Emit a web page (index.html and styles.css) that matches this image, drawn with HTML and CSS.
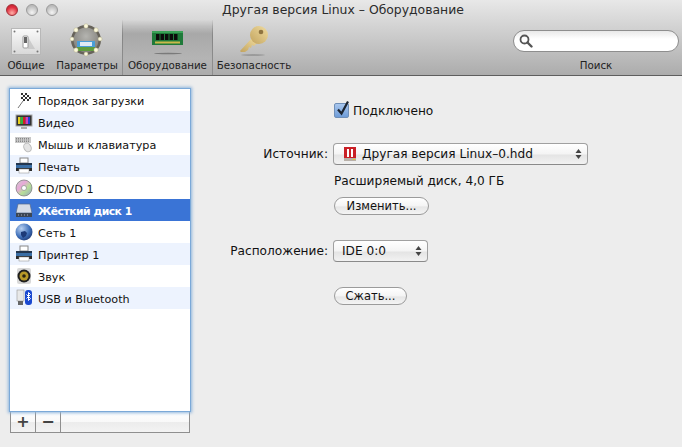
FILE: index.html
```html
<!DOCTYPE html>
<html lang="ru">
<head>
<meta charset="utf-8">
<title>Другая версия Linux – Оборудование</title>
<link rel="stylesheet" href="styles.css">
</head>
<body>
<div class="window">
  <header class="toolbar">
    <div class="titlebar">
      <div class="lights">
        <span class="light red"></span><span class="light"></span><span class="light"></span>
      </div>
      <div class="title">Другая версия Linux – Оборудование</div>
    </div>
    <div class="tools">
      <div class="tool t-general">
        <svg class="ticon" width="32" height="32" viewBox="0 0 32 32">
          <defs><linearGradient id="plate" x1="0" y1="0" x2="0" y2="1"><stop offset="0" stop-color="#fafafa"/><stop offset="1" stop-color="#d8d8d8"/></linearGradient></defs>
          <rect x="1.500" y="3.500" width="29" height="26" fill="url(#plate)" stroke="#b8b8b8"/>
          <circle cx="4.500" cy="6.500" r="1" fill="#777"/><circle cx="27.500" cy="6.500" r="1" fill="#777"/><circle cx="4.500" cy="26.500" r="1" fill="#777"/><circle cx="27.500" cy="26.500" r="1" fill="#777"/>
          <path d="M18 12l7 12h-7z" fill="#bbb" opacity=".6"/>
          <rect x="13" y="11" width="5" height="12" rx="1" fill="#fff" stroke="#9a9a9a"/>
          <rect x="14" y="12" width="3" height="6" fill="#666"/>
        </svg>
        <span class="tlabel">Общие</span>
      </div>
      <div class="tool t-params">
        <svg class="ticon" width="34" height="34" viewBox="0 0 34 34">
          <defs><radialGradient id="dial" cx=".5" cy=".35" r=".7"><stop offset="0" stop-color="#b4b4b0"/><stop offset="1" stop-color="#7e7c76"/></radialGradient></defs>
          <circle cx="17" cy="17" r="15" fill="#67635a"/>
          <circle cx="17" cy="17" r="12.500" fill="url(#dial)"/>
          <rect x="8" y="18" width="18" height="6" fill="#4a9ed6"/>
          <rect x="8" y="24" width="18" height="4" fill="#5f9c3e"/>
          <rect x="11" y="19" width="12" height="4" fill="#dfeaf4"/>
          <g fill="#fbf8dc" stroke="#a8a47c" stroke-width=".4">
            <circle cx="17" cy="3" r="2.200"/><circle cx="27" cy="7" r="2.200"/><circle cx="31" cy="16" r="2"/><circle cx="27" cy="27" r="2.200"/><circle cx="17" cy="31" r="2"/><circle cx="7" cy="27" r="2.200"/><circle cx="3" cy="16" r="2"/><circle cx="7" cy="7" r="2.200"/>
          </g>
        </svg>
        <span class="tlabel">Параметры</span>
      </div>
      <div class="tool t-hardware">
        <svg class="ticon" width="32" height="32" viewBox="0 0 32 32">
          <rect x="0" y="6" width="31" height="14" fill="#1f7a3a"/>
          <rect x="0" y="6" width="31" height="2" fill="#3aa257"/>
          <g fill="#0c0c0c"><rect x="4" y="9" width="3.500" height="6"/><rect x="8.500" y="9" width="3.500" height="6"/><rect x="13" y="9" width="3.500" height="6"/><rect x="17.500" y="9" width="3.500" height="6"/><rect x="22" y="9" width="3.500" height="6"/></g>
          <rect x="3" y="16.500" width="25" height="2" fill="#c9b94a"/>
          <ellipse cx="16" cy="28.500" rx="14" ry=".8" fill="#555" opacity=".6"/>
        </svg>
        <span class="tlabel">Оборудование</span>
      </div>
      <div class="tool t-security">
        <svg class="ticon" width="32" height="32" viewBox="0 0 32 32">
          <defs><linearGradient id="keyg" x1="1" y1="0" x2="0" y2="1"><stop offset="0" stop-color="#f0dca0"/><stop offset="1" stop-color="#c2a35e"/></linearGradient></defs>
          <path d="M1 26l12-13 5 5-3 3-2-1-1 3-2-1-1 3-3 2-4 0z" fill="url(#keyg)"/>
          <circle cx="20" cy="10" r="9" fill="url(#keyg)"/>
          <circle cx="22" cy="7" r="2.300" fill="#8f7440"/>
          <ellipse cx="14" cy="30" rx="12" ry=".8" fill="#666" opacity=".5"/>
        </svg>
        <span class="tlabel">Безопасность</span>
      </div>
      <div class="tool t-search">
        <div class="searchfield">
          <svg width="14" height="14" viewBox="0 0 14 14"><circle cx="5.500" cy="5.500" r="4" fill="none" stroke="#555" stroke-width="1.800"/><path d="M8.500 8.500l4 4" stroke="#555" stroke-width="2.400" stroke-linecap="round"/></svg>
        </div>
        <span class="tlabel">Поиск</span>
      </div>
    </div>
  </header>

  <main class="content">
    <aside class="sidebar">
      <ul class="list">
        <li class="row">
          <svg class="ricon" width="18" height="18" viewBox="0 0 18 18"><path d="M3 17L8 10" stroke="#777"/><g fill="#333"><rect x="6" y="2" width="2" height="2"/><rect x="10" y="2" width="2" height="2"/><rect x="8" y="4" width="2" height="2"/><rect x="12" y="4" width="2" height="2"/><rect x="6" y="6" width="2" height="2"/><rect x="10" y="6" width="2" height="2"/><rect x="14" y="6" width="2" height="2"/><rect x="8" y="8" width="2" height="2"/><rect x="12" y="8" width="2" height="2"/></g></svg>
          <span>Порядок загрузки</span>
        </li>
        <li class="row alt">
          <svg class="ricon" width="18" height="18" viewBox="0 0 18 18"><rect x="1" y="2" width="16" height="11" fill="#333" stroke="#aaa"/><rect x="3" y="4" width="2.500" height="7" fill="#e8d020"/><rect x="5.500" y="4" width="2.500" height="7" fill="#30b040"/><rect x="8" y="4" width="2.500" height="7" fill="#d02020"/><rect x="10.500" y="4" width="2.500" height="7" fill="#d040c0"/><rect x="13" y="4" width="2" height="7" fill="#2040d0"/><rect x="6" y="14" width="6" height="2" fill="#aaa"/></svg>
          <span>Видео</span>
        </li>
        <li class="row">
          <svg class="ricon" width="18" height="18" viewBox="0 0 18 18"><path d="M0 2h16v6H0z" fill="#c8c8c8"/><path d="M1 3.500h14M1 5h14M1 6.500h14" stroke="#888" stroke-dasharray="1 1"/><ellipse cx="12.500" cy="12.500" rx="3.500" ry="4.500" transform="rotate(-30 12.500 12.500)" fill="#e4e4e4" stroke="#bbb"/></svg>
          <span>Мышь и клавиатура</span>
        </li>
        <li class="row alt">
          <svg class="ricon" width="18" height="18" viewBox="0 0 18 18"><rect x="5" y="1" width="8" height="5" fill="#fff" stroke="#888"/><rect x="1" y="6" width="16" height="7" rx="1" fill="#3a6ea5"/><rect x="1" y="6" width="16" height="2" fill="#23364e"/><rect x="1" y="11" width="16" height="3" fill="#2b2b2b"/><rect x="4" y="12" width="10" height="4" fill="#fff" stroke="#888" stroke-width=".5"/></svg>
          <span>Печать</span>
        </li>
        <li class="row">
          <svg class="ricon" width="18" height="18" viewBox="0 0 18 18"><defs><linearGradient id="cd" x1="0" y1="0" x2="1" y2="1"><stop offset="0" stop-color="#c8d0c8"/><stop offset=".35" stop-color="#e8a8d8"/><stop offset=".6" stop-color="#b8e098"/><stop offset="1" stop-color="#90a0c0"/></linearGradient></defs><circle cx="9" cy="9" r="8" fill="url(#cd)" stroke="#777" stroke-width=".7"/><circle cx="9" cy="9" r="2.500" fill="#fff" stroke="#888" stroke-width=".7"/></svg>
          <span>CD/DVD 1</span>
        </li>
        <li class="row selected">
          <svg class="ricon" width="18" height="18" viewBox="0 0 18 18"><path d="M3 3h12l2 9H1z" fill="#d6dce6" stroke="#54688a" stroke-width=".7"/><rect x="1" y="12" width="16" height="4" fill="#3c4654"/><path d="M3 14h1M6 14h1M9 14h1M12 14h1" stroke="#aab"/></svg>
          <span>Жёсткий диск 1</span>
        </li>
        <li class="row">
          <svg class="ricon" width="18" height="18" viewBox="0 0 18 18"><defs><radialGradient id="globe" cx=".35" cy=".3" r=".8"><stop offset="0" stop-color="#b8d0f0"/><stop offset=".6" stop-color="#3f70ba"/><stop offset="1" stop-color="#1c3570"/></radialGradient></defs><circle cx="9" cy="9" r="8.500" fill="url(#globe)"/><path d="M6 9l4-1 2 2-1 3-3 2-2-3z" fill="#1d3a78"/></svg>
          <span>Сеть 1</span>
        </li>
        <li class="row alt">
          <svg class="ricon" width="18" height="18" viewBox="0 0 18 18"><rect x="5" y="1" width="8" height="5" fill="#fff" stroke="#888"/><rect x="1" y="6" width="16" height="7" rx="1" fill="#3a6ea5"/><rect x="1" y="6" width="16" height="2" fill="#23364e"/><rect x="1" y="11" width="16" height="3" fill="#2b2b2b"/><rect x="4" y="12" width="10" height="4" fill="#fff" stroke="#888" stroke-width=".5"/></svg>
          <span>Принтер 1</span>
        </li>
        <li class="row">
          <svg class="ricon" width="18" height="18" viewBox="0 0 18 18"><rect x="2" y="1" width="14" height="16" rx="2" fill="#d8d8d8"/><circle cx="9" cy="9" r="6.500" fill="#1e1e1e"/><circle cx="9" cy="9" r="4.500" fill="#b89a28"/><circle cx="9" cy="9" r="1.800" fill="#2a2410"/></svg>
          <span>Звук</span>
        </li>
        <li class="row alt">
          <svg class="ricon" width="18" height="18" viewBox="0 0 18 18"><rect x="2" y="1" width="7" height="11" fill="#e8e8e8" stroke="#999" stroke-width=".6"/><rect x="3" y="12" width="5" height="4" fill="#666"/><rect x="10" y="1" width="7" height="15" rx="3" fill="#1a48d0"/><path d="M11.500 5.500l4 4-2 2v-8l2 2-4 4" fill="none" stroke="#fff"/></svg>
          <span>USB и Bluetooth</span>
        </li>
      </ul>
      <div class="listbar">
        <span class="lbtn">+</span><span class="lbtn">−</span>
      </div>
    </aside>

    <section class="pane">
      <div class="form-row r-check">
        <span></span>
        <label class="check"><span class="checkbox"><svg width="16" height="18" viewBox="0 0 16 18"><path d="M3 9.500l3.500 4L13 1.500" fill="none" stroke="#1c2430" stroke-width="2.200"/></svg></span><span class="checktext">Подключено</span></label>
      </div>
      <div class="form-row r-source">
        <span class="flabel">Источник:</span>
        <div class="select wide">
          <svg class="hdd" width="14" height="16" viewBox="0 0 14 16"><rect x="1" y="1" width="12" height="13" fill="#c92026"/><rect x="4" y="3" width="2" height="8" fill="#fff"/><rect x="8" y="3" width="2" height="8" fill="#fff"/><rect x="1" y="12" width="12" height="3" fill="#b8b0a8"/><rect x="10" y="13" width="2" height="1" fill="#e8d020"/></svg>
          <span class="sval">Другая версия Linux–0.hdd</span>
          <svg class="arrows" width="7" height="12" viewBox="0 0 7 12"><path d="M3.500 1L6.500 5h-6zM3.500 11L.5 7h6z" fill="#444"/></svg>
        </div>
      </div>
      <div class="form-row r-info"><span></span><span class="info">Расширяемый диск, 4,0 ГБ</span></div>
      <div class="form-row r-change"><span></span><button class="pill pill-change">Изменить...</button></div>
      <div class="form-row r-loc">
        <span class="flabel">Расположение:</span>
        <div class="select narrow">
          <span class="sval">IDE 0:0</span>
          <svg class="arrows" width="7" height="12" viewBox="0 0 7 12"><path d="M3.500 1L6.500 5h-6zM3.500 11L.5 7h6z" fill="#444"/></svg>
        </div>
      </div>
      <div class="form-row r-compress"><span></span><button class="pill pill-compress">Сжать...</button></div>
    </section>
  </main>
</div>
</body>
</html>
```

FILE: styles.css
```css
html, body { margin: 0; padding: 0; }
body {
  width: 682px;
  height: 447px;
  overflow: hidden;
  background: #ededed;
  font-family: "DejaVu Sans", "Liberation Sans", sans-serif;
  font-size: 12.150px;
  color: #111;
}
.window { display: flex; flex-direction: column; height: 447px; }

.toolbar {
  height: 75px;
  border-bottom: 1px solid #5e5e5e;
  background: linear-gradient(#e8e8e8, #acacac);
  box-sizing: content-box;
  display: flex;
  flex-direction: column;
}
.titlebar { height: 20px; display: flex; align-items: center; position: relative; }
.lights { display: flex; gap: 8px; padding-left: 6px; }
.light {
  width: 12px;
  height: 12px;
  border-radius: 50%;
  box-sizing: border-box;
  border: 1px solid #9a9a9a;
  background: radial-gradient(circle at 50% 75%, #f4f4f4, #bcbcbc 70%);
}
.light.red {
  border-color: #a03038;
  background: radial-gradient(circle at 50% 80%, #ffb0a8, #e03040 60%, #b81c28);
}
.title {
  position: absolute;
  left: 222px;
  top: 1px;
  font-size: 12.400px;
  line-height: 18px;
  color: #2b2b2b;
  white-space: nowrap;
}

.tools { flex: 1; display: flex; align-items: stretch; }
.tool {
  display: flex;
  flex-direction: column;
  align-items: center;
  justify-content: flex-end;
  position: relative;
  box-sizing: border-box;
  padding-bottom: 3px;
}
.ticon { position: absolute; left: 50%; margin-left: -16px; top: 5px; }
.tlabel { font-size: 10.300px; line-height: 14px; color: #222; white-space: nowrap; }
.t-general { width: 52px; }
.t-params { width: 70px; }
.t-params .ticon { margin-left: -18px; top: 3px; }
.t-hardware {
  width: 91px;
  background: linear-gradient(rgba(150, 150, 150, 0) 0, #a8a8a8 25%, #b4b4b4 70%, #acacac);
  border-left: 1px solid;
  border-right: 1px solid;
  border-image: linear-gradient(rgba(130, 130, 130, 0), #868686 30%, #909090) 1;
}
.t-security { width: 80px; padding-left: 2px; }
.t-security .ticon { margin-left: -14px; }
.t-search { width: 166px; margin-left: auto; margin-right: 3px; }
.searchfield {
  position: absolute;
  top: 10px;
  left: 0;
  right: 0;
  height: 20px;
  box-sizing: content-box;
  width: 164px;
  border: 1px solid #8e8e8e;
  border-radius: 11px;
  background: linear-gradient(#e9e9e9, #fff 40%);
  display: flex;
  align-items: center;
  padding-left: 0;
}
.searchfield svg { margin-left: 5px; }

.content { flex: 1; display: flex; min-height: 0; }
.sidebar { width: 190px; padding: 13px 0 0 10px; box-sizing: border-box; display: flex; flex-direction: column; }
.list {
  list-style: none;
  margin: 0;
  padding: 0;
  height: 322px;
  background: #fff;
  box-shadow: 0 0 0 1px #7ba9d8, 0 0 3px 2px #8fb5dc;
  position: relative;
  z-index: 1;
}
.row {
  height: 22px;
  display: flex;
  align-items: center;
  gap: 6px;
  padding-left: 6px;
  white-space: nowrap;
  color: #111;
  font-size: 11.200px;
}
.row span { padding-top: 2px; }
.ricon { flex: none; margin-left: -1px; margin-right: -1px; }
.row.alt { background: #edf3fe; }
.row.selected {
  background: #3a74d6;
  color: #fff;
  font-weight: bold;
  font-size: 10.800px;
  letter-spacing: -.5px;
}

.listbar {
  height: 21px;
  border: 1px solid #8f8f8f;
  border-top: none;
  background: linear-gradient(#fff 0, #f9f9f9 50%, #ececec 55%, #f3f3f3);
  display: flex;
  box-sizing: content-box;
}
.lbtn {
  width: 24px;
  border-right: 1px solid #8f8f8f;
  display: flex;
  align-items: center;
  justify-content: center;
  font-size: 16px;
  font-weight: bold;
  color: #444;
  line-height: 1;
}

.pane { flex: 1; display: flex; flex-direction: column; min-width: 0; }
.form-row {
  display: grid;
  grid-template-columns: 138px 1fr;
  column-gap: 5px;
  align-items: center;
}
.flabel { text-align: right; white-space: nowrap; }
.r-check { margin-top: 26px; height: 16px; }
.check { display: flex; align-items: center; gap: 4px; margin-left: 1px; }
.checktext { padding-top: 2px; }
.checkbox {
  width: 13px;
  height: 13px;
  border: 1px solid #6f8fb8;
  border-radius: 2px;
  background: linear-gradient(#a9c7ee, #6e9cd8);
  position: relative;
  display: block;
}
.checkbox svg { position: absolute; left: 0; top: -4px; }

.r-source { margin-top: 25px; height: 22px; }
.select {
  height: 20px;
  box-sizing: content-box;
  border: 1px solid #a0a0a0;
  border-bottom-color: #8a8a8a;
  border-radius: 4px;
  background: linear-gradient(#fff, #f4f4f4 50%, #e4e4e4 55%, #f2f2f2);
  display: flex;
  align-items: center;
  position: relative;
}
.select.wide { width: 253px; }
.select.narrow { width: 93px; }
.hdd { margin-left: 9px; flex: none; }
.sval { margin-left: 5px; white-space: nowrap; }
.narrow .sval { margin-left: 8px; }
.arrows { position: absolute; right: 5px; top: 4px; }

.r-info { margin-top: 7px; height: 17px; }
.info { margin-left: 1px; white-space: nowrap; }
.r-change { margin-top: 8px; height: 18px; }
.pill {
  height: 18px;
  margin: 0 0 0 1px;
  padding: 0;
  border: 1px solid #9b9b9b;
  border-radius: 9px;
  background: linear-gradient(#fff, #f4f4f4 50%, #e6e6e6 55%, #f4f4f4);
  font: inherit;
  font-size: 11.500px;
  color: #111;
  box-sizing: border-box;
}
.pill-change { width: 95px; }
.pill-compress { width: 73px; }
.r-loc { margin-top: 25px; height: 22px; }
.r-compress { margin-top: 25px; height: 18px; }
```
